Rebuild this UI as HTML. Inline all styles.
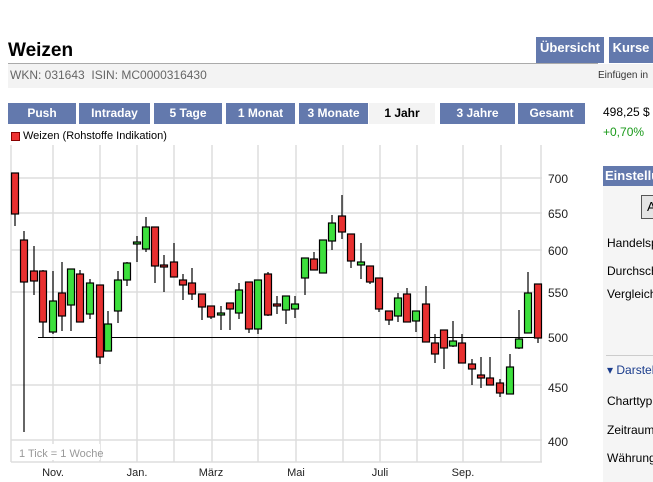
<!DOCTYPE html>
<html style="overflow:hidden"><head><meta charset="utf-8"><style>
html,body{overflow:hidden}
body{margin:0;width:653px;height:482px;overflow:hidden;background:#fff;font-family:"Liberation Sans",sans-serif;position:relative}
.a{position:absolute;white-space:nowrap}
.tab{position:absolute;top:103px;height:21px;background:#6379ad;color:#fff;font-weight:bold;font-size:12px;line-height:21px;text-align:center}
.btn{position:absolute;top:37px;height:26px;background:#6379ad;color:#fff;font-weight:bold;font-size:13px;line-height:22px;text-align:center;overflow:hidden;white-space:nowrap}
.p{position:absolute;left:607px;font-size:12px;color:#000;white-space:nowrap}
#wrap{position:absolute;left:0;top:0;width:653px;height:482px;overflow:hidden}
</style></head><body><div id="wrap">
<div class="a" style="left:8px;top:40px;font-size:19px;font-weight:bold">Weizen</div>
<div class="btn" style="left:536px;width:68px">Übersicht</div>
<div class="btn" style="left:609px;width:44px">Kurse</div>
<div class="a" style="left:8px;top:63px;width:590px;height:1px;background:#aaa"></div>
<div class="a" style="left:8px;top:64px;width:645px;height:24px;background:#f3f3f3"></div>
<div class="a" style="left:10px;top:68px;font-size:12px;color:#666">WKN: 031643 &nbsp;ISIN: MC0000316430</div>
<div class="a" style="left:598px;top:70px;font-size:10px;color:#333">Einfügen in</div>
<div class="tab" style="left:8px;width:68px">Push</div>
<div class="tab" style="left:79px;width:71px">Intraday</div>
<div class="tab" style="left:154px;width:68px">5 Tage</div>
<div class="tab" style="left:226px;width:69px">1 Monat</div>
<div class="tab" style="left:299px;width:69px">3 Monate</div>
<div class="tab" style="left:369px;width:66px;background:#f3f3f3;color:#000">1 Jahr</div>
<div class="tab" style="left:440px;width:75px">3 Jahre</div>
<div class="tab" style="left:518px;width:67px">Gesamt</div>
<div class="a" style="left:603px;top:105px;font-size:12px">498,25 $</div>
<div class="a" style="left:603px;top:125px;font-size:12px;color:#1a9a1a">+0,70%</div>
<div class="a" style="left:11px;top:132px;width:9px;height:9px;background:#e33;border:1px solid #800;box-sizing:border-box"></div>
<div class="a" style="left:23px;top:130px;font-size:11px">Weizen (Rohstoffe Indikation)</div>
<div class="a" style="left:603px;top:166px;width:50px;height:20px;background:#6379ad;color:#fff;font-weight:bold;font-size:13px;line-height:20px;padding-left:2px;overflow:hidden">Einstellungen</div>
<div class="a" style="left:603px;top:186px;width:50px;height:296px;background:#f5f5f5"></div>
<div class="a" style="left:641px;top:195px;width:20px;height:22px;background:#e4e4e4;border:1px solid #555;font-size:13px;line-height:22px;padding-left:5px">A</div>
<div class="p" style="top:236px">Handelsplatz</div>
<div class="p" style="top:264px">Durchschnitt</div>
<div class="p" style="top:287px">Vergleich</div>
<div class="a" style="left:606px;top:355px;width:47px;height:1px;background:#ccc"></div>
<div class="p" style="top:363px;color:#1a3c8c;left:607px">▾ Darstellung</div>
<div class="p" style="top:394px">Charttyp</div>
<div class="p" style="top:423px">Zeitraum</div>
<div class="p" style="top:451px">Währung</div>
<svg class="a" style="left:0;top:0" width="600" height="482">
<g stroke="#ddd" stroke-width="1.5">
<line x1="11" y1="145" x2="11" y2="462"/><line x1="53" y1="145" x2="53" y2="462"/><line x1="100" y1="145" x2="100" y2="462"/><line x1="137" y1="145" x2="137" y2="462"/><line x1="174" y1="145" x2="174" y2="462"/><line x1="212" y1="145" x2="212" y2="462"/><line x1="258" y1="145" x2="258" y2="462"/><line x1="296" y1="145" x2="296" y2="462"/><line x1="343" y1="145" x2="343" y2="462"/><line x1="380" y1="145" x2="380" y2="462"/><line x1="417" y1="145" x2="417" y2="462"/><line x1="463" y1="145" x2="463" y2="462"/><line x1="501" y1="145" x2="501" y2="462"/><line x1="541" y1="145" x2="541" y2="462"/>
<line x1="11" y1="178" x2="542" y2="178"/><line x1="11" y1="213" x2="542" y2="213"/><line x1="11" y1="250" x2="542" y2="250"/><line x1="11" y1="292" x2="542" y2="292"/><line x1="11" y1="385" x2="542" y2="385"/><line x1="11" y1="440" x2="542" y2="440"/><line x1="11" y1="462" x2="542" y2="462"/>
</g>
<line x1="38" y1="337.5" x2="542" y2="337.5" stroke="#000"/>
<g stroke="#000" stroke-width="1.2" id="c"></g>
<g font-size="12" fill="#222"><text x="548" y="183">700</text><text x="548" y="218">650</text><text x="548" y="255">600</text><text x="548" y="297">550</text><text x="548" y="342">500</text><text x="548" y="392">450</text><text x="548" y="446">400</text></g>
<g font-size="11" fill="#222" text-anchor="middle"><text x="53" y="476">Nov.</text><text x="137" y="476">Jan.</text><text x="211" y="476">März</text><text x="296" y="476">Mai</text><text x="380" y="476">Juli</text><text x="463" y="476">Sep.</text></g>
<rect x="13" y="444" width="87" height="16" fill="#fff"/>
<text x="19" y="457" font-size="11" fill="#999">1 Tick = 1 Woche</text>
</svg>
</div>
<script>
var d=[[15,'r',173,214,173,226],[24,'r',240,282,231,432],[34,'r',271,281,246,295],[43,'r',271,322,270,337],[53,'g',301,332,271,334],[62,'r',293,316,262,331],[71,'g',269,305,269,331],[80,'r',274,322,270,322],[90,'g',283,314,279,319],[100,'r',285,357,285,364],[108,'g',324,351,311,351],[118,'g',280,311,271,323],[127,'g',263,280,262,286],[137,'g',242,244,236,262],[146,'g',227,249,217,252],[155,'r',227,266,227,283],[164,'r',265,267,255,292],[174,'r',262,277,243,277],[183,'r',280,285,274,300],[192,'r',283,294,268,300],[202,'r',294,307,294,320],[211,'r',306,317,306,319],[221,'g',313,315,306,330],[230,'r',303,309,303,330],[239,'g',290,313,283,319],[249,'r',282,329,282,333],[258,'g',280,329,280,334],[268,'r',274,315,272,316],[277,'r',304,305,296,314],[286,'g',296,310,296,324],[295,'g',304,309,296,318],[305,'g',258,278,258,295],[314,'r',259,270,252,270],[323,'g',240,273,240,273],[332,'g',223,241,215,250],[342,'r',216,232,195,239],[351,'r',234,261,234,268],[361,'g',262,265,243,279],[370,'r',266,282,266,284],[379,'r',278,309,278,312],[389,'r',311,320,311,325],[398,'g',298,316,293,322],[407,'r',294,322,288,322],[416,'g',311,321,311,332],[426,'r',304,342,286,342],[435,'r',343,354,334,363],[444,'r',330,348,330,369],[453,'g',341,346,321,347],[462,'r',343,363,334,363],[472,'r',364,369,359,385],[481,'r',375,378,357,388],[490,'r',378,385,357,385],[500,'r',383,393,379,397],[510,'g',367,394,354,394],[519,'g',339,348,310,349],[528,'g',293,333,272,333],[538,'r',284,338,284,343]];
var g=document.getElementById('c'),s='';
d.forEach(function(c){s+='<line x1="'+c[0]+'" y1="'+c[4]+'" x2="'+c[0]+'" y2="'+c[5]+'"/>';s+='<rect x="'+(c[0]-3.5)+'" y="'+c[2]+'" width="7" height="'+Math.max(2,c[3]-c[2])+'" fill="'+(c[1]=='r'?'#e83030':'#3de03d')+'"/>';});
g.innerHTML=s;
</script>
</body></html>
